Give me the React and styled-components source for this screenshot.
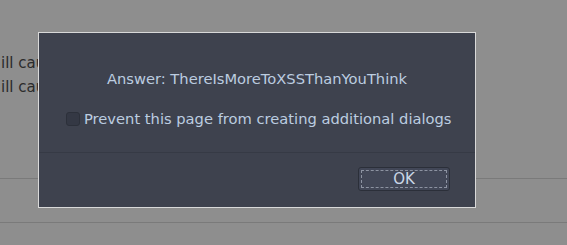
import React from "react";
import styled, { createGlobalStyle } from "styled-components";

const Global = createGlobalStyle`
  html, body { margin: 0; padding: 0; }
  body {
    background: #8e8e8e;
    font-family: "DejaVu Sans", "Noto Sans", sans-serif;
    width: 567px;
    height: 245px;
    overflow: hidden;
  }
`;

const Page = styled.div`
  position: relative;
  width: 567px;
  height: 245px;
`;

const Backdrop = styled.div`
  padding-top: 51px;
  display: flex;
  flex-direction: column;
`;

const BgLine = styled.div`
  font-size: 15px;
  line-height: 24px;
  color: #2b2b2b;
  padding-left: 1px;
  white-space: nowrap;
`;

const Rule = styled.div`
  height: 1px;
  background: #7a7a7a;
  margin-top: ${(p) => p.$gap}px;
`;

const Dialog = styled.div`
  position: absolute;
  left: 38px;
  top: 32px;
  width: 436px;
  height: 174px;
  border: 1px solid #d9d9d9;
  background: #3e424e;
  display: flex;
  flex-direction: column;
`;

const Body = styled.div`
  height: 119px;
  display: flex;
  flex-direction: column;
  border-bottom: 1px solid #363a45;
`;

const Message = styled.div`
  margin-top: 37px;
  text-align: center;
  font-size: 14.7px;
  line-height: 18px;
  color: #bccde0;
`;

const CheckRow = styled.label`
  margin-top: 22px;
  margin-left: 27px;
  display: flex;
  align-items: center;
  gap: 4px;
  font-size: 14.7px;
  line-height: 18px;
  color: #bccde0;
`;

const Box = styled.span`
  width: 12px;
  height: 12px;
  border: 1px solid #2c303a;
  border-radius: 3px;
  background: #343844;
`;

const Footer = styled.div`
  flex: 1;
  display: flex;
  justify-content: flex-end;
  align-items: flex-start;
  padding-top: 14px;
  padding-right: 25px;
`;

const Button = styled.button`
  position: relative;
  width: 92px;
  height: 24px;
  border: 1px solid #2b2f39;
  border-radius: 3px;
  background: #424757;
  color: #c9d6e6;
  font-family: "DejaVu Sans", sans-serif;
  font-size: 15px;
  line-height: 20px;
  padding: 0;
  display: flex;
  align-items: center;
  justify-content: center;
  &::after {
    content: "";
    position: absolute;
    inset: 2px;
    border: 1px dashed #8d93a2;
  }
`;

export default function App() {
  return (
    <>
      <Global />
      <Page>
        <Backdrop>
          <BgLine>ill cause</BgLine>
          <BgLine>ill cause</BgLine>
          <Rule $gap={79} />
          <Rule $gap={43} />
        </Backdrop>
        <Dialog>
          <Body>
            <Message>Answer: ThereIsMoreToXSSThanYouThink</Message>
            <CheckRow>
              <Box />
              Prevent this page from creating additional dialogs
            </CheckRow>
          </Body>
          <Footer>
            <Button>OK</Button>
          </Footer>
        </Dialog>
      </Page>
    </>
  );
}
